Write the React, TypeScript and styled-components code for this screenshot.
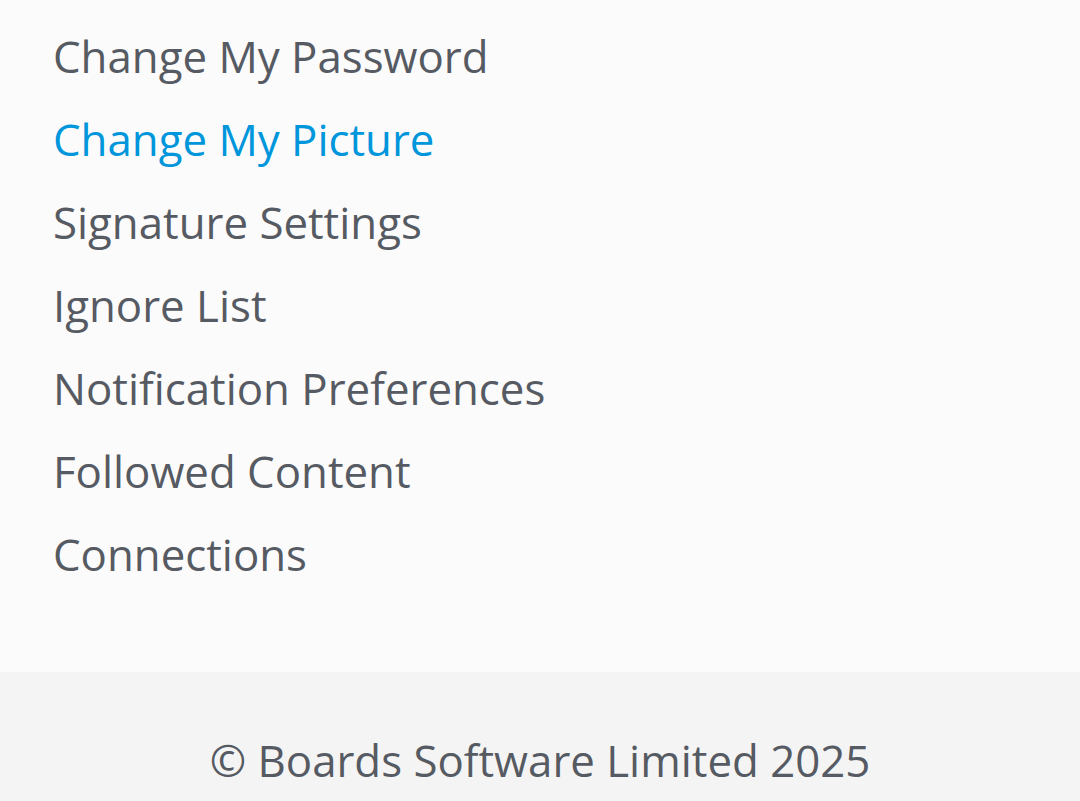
import React from "react";
import styled, { createGlobalStyle } from "styled-components";

const Global = createGlobalStyle`
  html, body { margin: 0; padding: 0; background: #fbfbfb; }
  body { font-family: "Open Sans", "Noto Sans", sans-serif; -webkit-font-smoothing: antialiased; }
`;

const Page = styled.div`
  display: flex;
  flex-direction: column;
  height: 100vh;
  overflow: hidden;
  background: #fbfbfb;
`;

const Menu = styled.ul`
  list-style: none;
  margin: 0;
  padding: 15px 0 76px 53px;
  display: flex;
  flex-direction: column;
  flex-shrink: 0;
`;

const Item = styled.li`
  height: 83px;
  display: flex;
  align-items: center;
`;

const Link = styled.a<{ $active?: boolean }>`
  font-size: 43.8px;
  line-height: 83px;
  color: ${(p) => (p.$active ? "#0096db" : "#565a62")};
  text-decoration: none;
  white-space: nowrap;
`;

const Footer = styled.footer`
  background: #f4f4f4;
  padding: 47px 0 0;
  text-align: center;
  flex: 1;
`;

const Copy = styled.div`
  font-size: 43.8px;
  line-height: 83px;
  color: #565a62;
`;

const items = [
  "Change My Password",
  "Change My Picture",
  "Signature Settings",
  "Ignore List",
  "Notification Preferences",
  "Followed Content",
  "Connections",
];

export default function App() {
  return (
    <Page>
      <Global />
      <Menu>
        {items.map((t) => (
          <Item key={t}>
            <Link href="#" $active={t === "Change My Picture"}>
              {t}
            </Link>
          </Item>
        ))}
      </Menu>
      <Footer>
        <Copy>© Boards Software Limited 2025</Copy>
      </Footer>
    </Page>
  );
}
